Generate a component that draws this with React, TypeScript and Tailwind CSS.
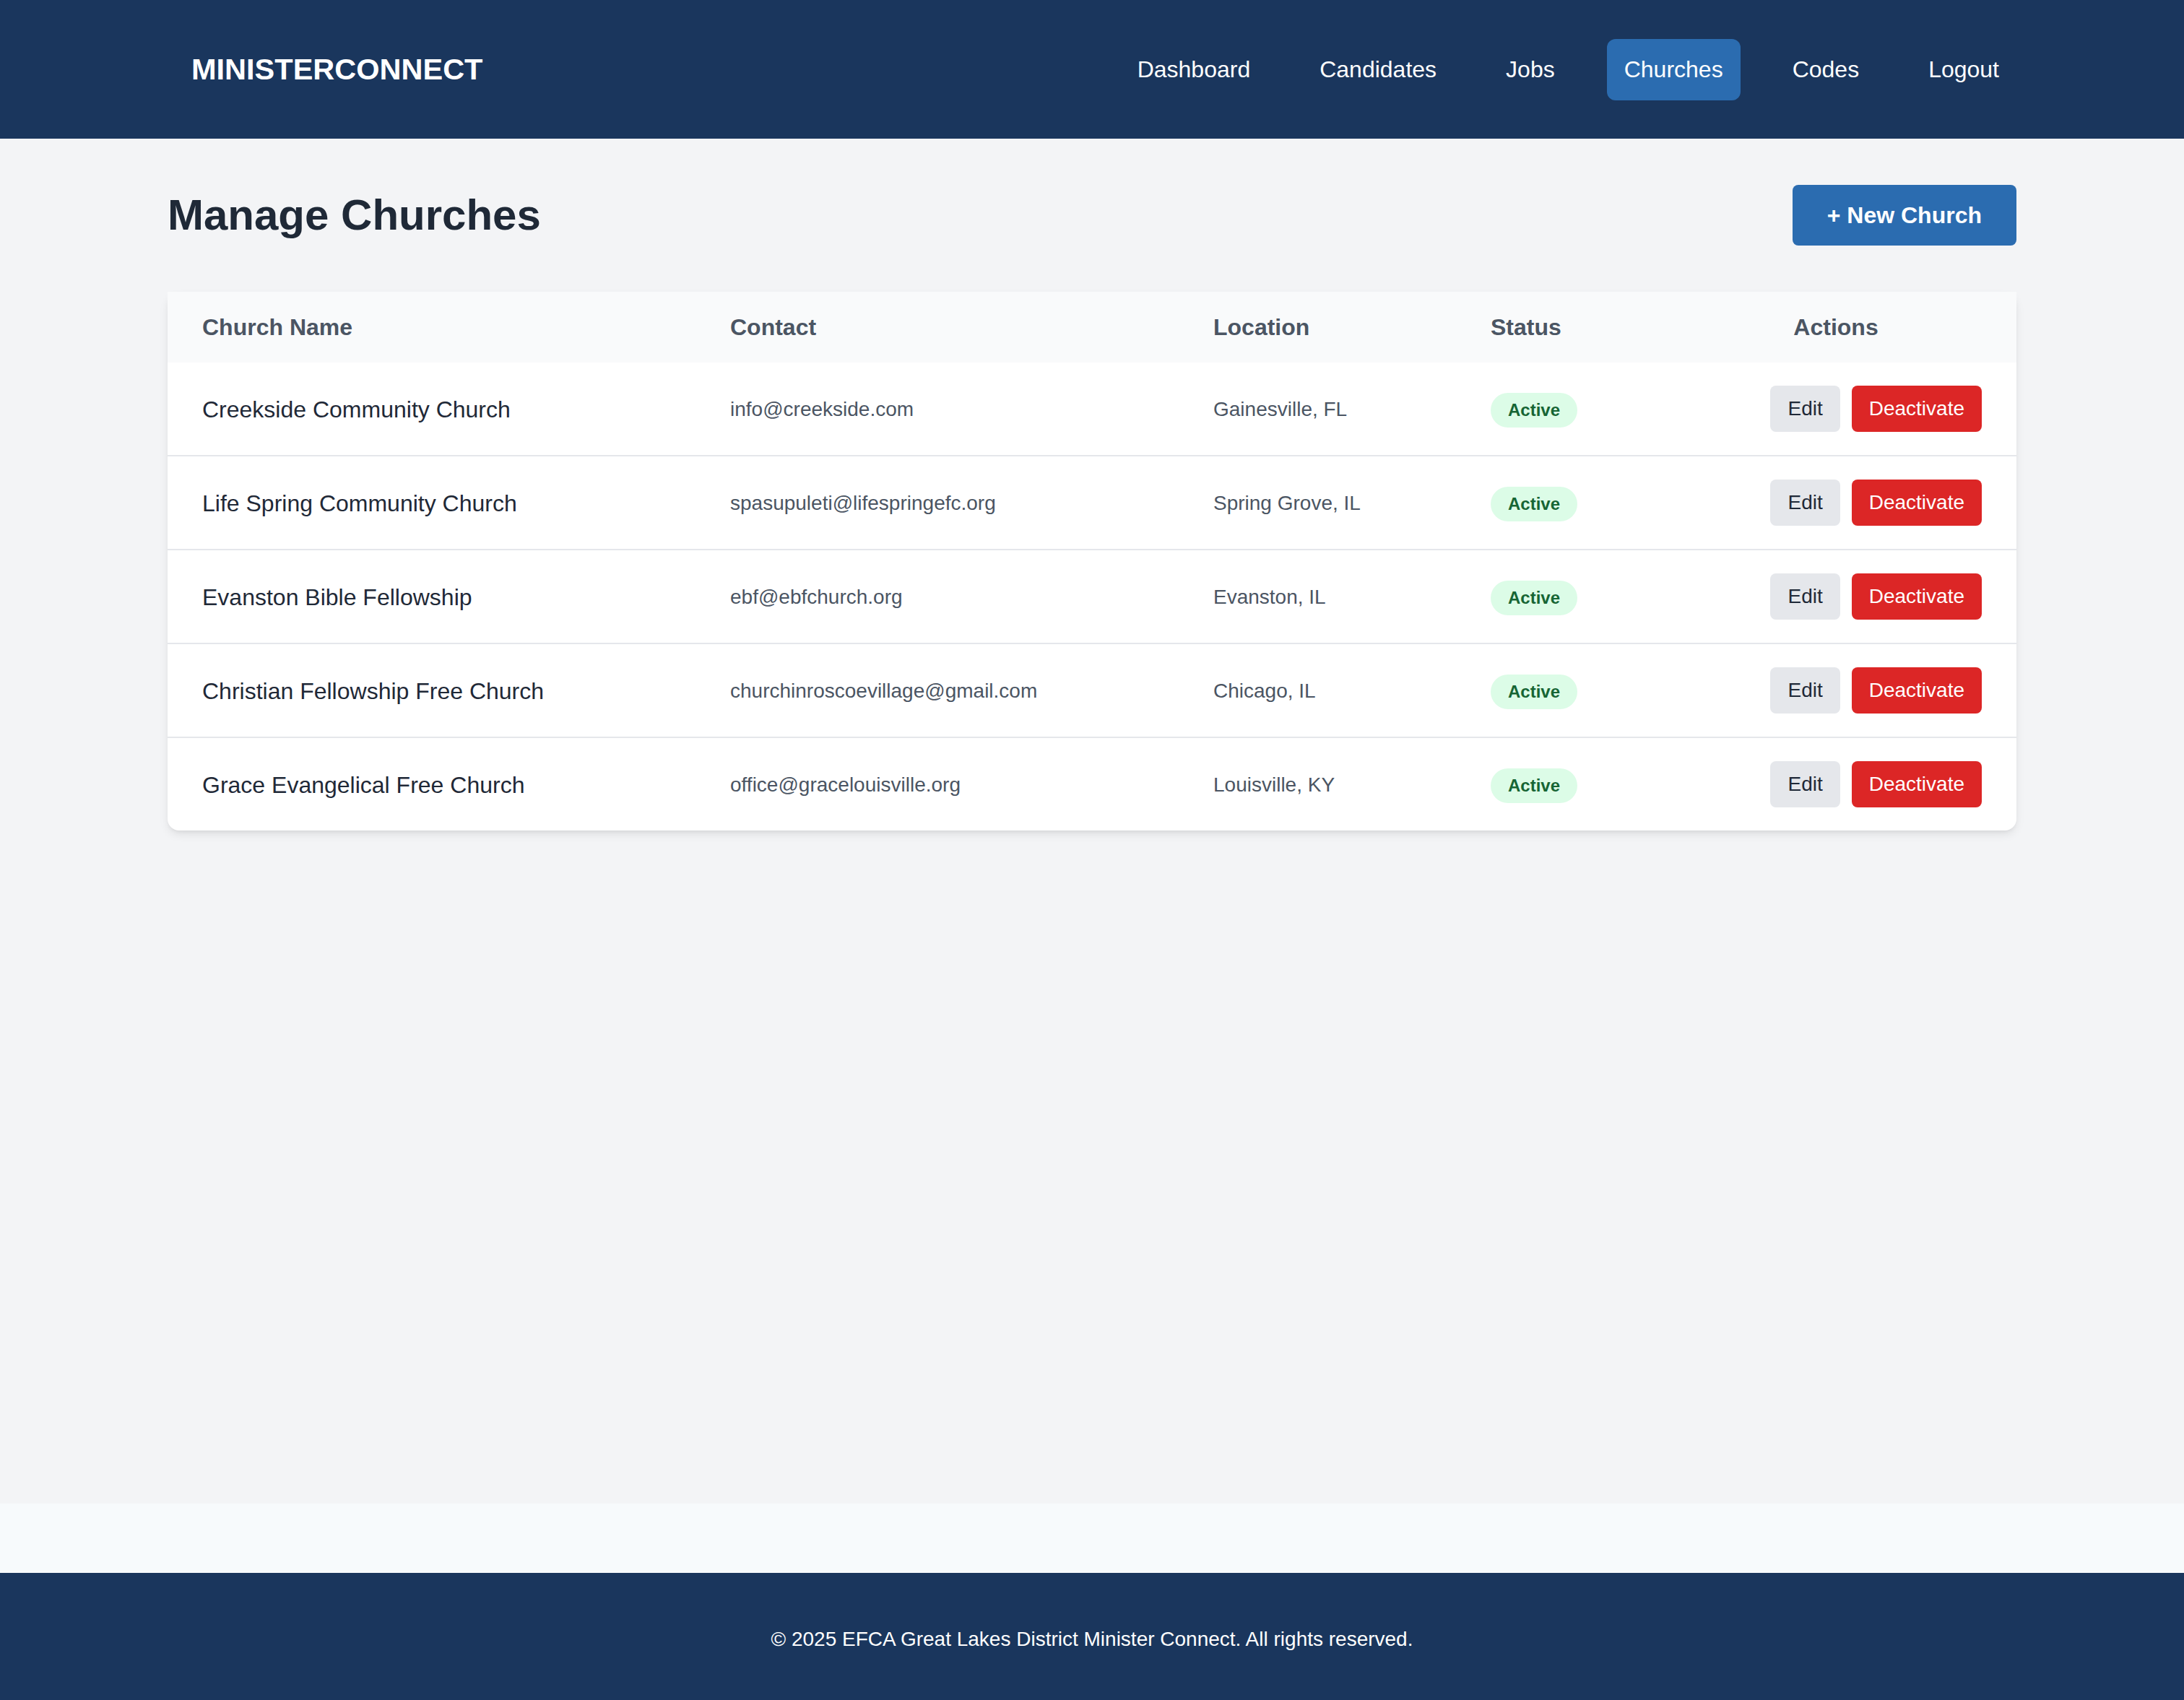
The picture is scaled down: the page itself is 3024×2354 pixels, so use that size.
import React from "react";

const churches = [
  { name: "Creekside Community Church", contact: "info@creekside.com", location: "Gainesville, FL" },
  { name: "Life Spring Community Church", contact: "spasupuleti@lifespringefc.org", location: "Spring Grove, IL" },
  { name: "Evanston Bible Fellowship", contact: "ebf@ebfchurch.org", location: "Evanston, IL" },
  { name: "Christian Fellowship Free Church", contact: "churchinroscoevillage@gmail.com", location: "Chicago, IL" },
  { name: "Grace Evangelical Free Church", contact: "office@gracelouisville.org", location: "Louisville, KY" },
];

const navItems = ["Dashboard", "Candidates", "Jobs", "Churches", "Codes", "Logout"];

export default function App() {
  return (
    <div
      className="min-h-screen flex flex-col bg-[#f7fafc]"
      style={{ fontFamily: '"Liberation Sans", Arial, Helvetica, sans-serif' }}
    >
      <header className="bg-[#1a365d] h-[192px] shrink-0">
        <div className="mx-auto w-[2560px] h-full flex items-center justify-between pl-[33px]">
          <div className="text-white font-bold text-[41.5px] leading-[48px]">MINISTERCONNECT</div>
          <nav className="flex items-center gap-[48px]">
            {navItems.map((item) => (
              <a
                key={item}
                className={
                  item === "Churches"
                    ? "px-[24px] py-[18px] text-[32px] leading-[49px] text-white rounded-[12px] bg-[#2b6cb0]"
                    : "px-[24px] py-[18px] text-[32px] leading-[49px] text-white rounded-[12px]"
                }
              >
                {item}
              </a>
            ))}
          </nav>
        </div>
      </header>

      <main className="flex-1 bg-[#f3f4f6]">
        <div className="mx-auto w-[2560px] pt-[64px]">
          <div className="flex items-center justify-between h-[84px] mb-[64px]">
            <h1 className="text-[60px] leading-[72px] font-bold text-[#1f2937]">Manage Churches</h1>
            <button className="bg-[#2b6cb0] text-white font-bold text-[32px] leading-[48px] px-[48px] py-[18px] rounded-[8px]">
              + New Church
            </button>
          </div>

          <div className="bg-white rounded-[16px] shadow-[0_6px_14px_-2px_rgba(0,0,0,0.1),0_3px_6px_-3px_rgba(0,0,0,0.08)]">
            <div className="grid grid-cols-[731px_669px_384px_276px_500px] h-[98px] items-center bg-[#f9fafb] text-[32px] font-bold text-[#4b5563]">
              <div className="pl-[48px]">Church Name</div>
              <div className="pl-[48px]">Contact</div>
              <div className="pl-[48px]">Location</div>
              <div className="pl-[48px]">Status</div>
              <div className="px-[48px] text-center">Actions</div>
            </div>
            {churches.map((c, i) => (
              <div
                key={c.name}
                className={
                  i < churches.length - 1
                    ? "grid grid-cols-[731px_669px_384px_276px_500px] h-[130px] items-center border-b-2 border-[#e5e7eb]"
                    : "grid grid-cols-[731px_669px_384px_276px_500px] h-[128px] items-center"
                }
              >
                <div className="pl-[48px] text-[32px] leading-[48px] pt-[2px] text-[#1f2937]">{c.name}</div>
                <div className="pl-[48px] text-[28px] leading-[40px] pt-[2px] text-[#4b5563]">{c.contact}</div>
                <div className="pl-[48px] text-[28px] leading-[40px] pt-[2px] text-[#4b5563]">{c.location}</div>
                <div className="pl-[48px] flex">
                  <span className="mt-[4px] px-[24px] py-[8px] text-[24px] leading-[32px] font-bold rounded-full bg-[#dcfce7] text-[#166534]">
                    Active
                  </span>
                </div>
                <div className="px-[48px] flex justify-end gap-[16px]">
                  <button className="px-[24px] py-[12px] text-[28px] leading-[40px] rounded-[8px] bg-[#e5e7eb] text-[#1f2937]">
                    Edit
                  </button>
                  <button className="px-[24px] py-[12px] text-[28px] leading-[40px] rounded-[8px] bg-[#dc2626] text-white">
                    Deactivate
                  </button>
                </div>
              </div>
            ))}
          </div>
        </div>
      </main>

      <footer className="mt-[96px] bg-[#1a365d] h-[176px] shrink-0 flex items-center justify-center">
        <p className="text-white text-[28px] leading-[40px] pt-[8px]">
          © 2025 EFCA Great Lakes District Minister Connect. All rights reserved.
        </p>
      </footer>
    </div>
  );
}
